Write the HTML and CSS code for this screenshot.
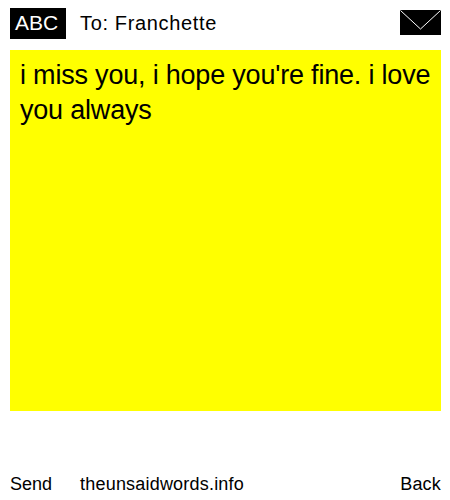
FILE: index.html
```html
<!DOCTYPE html>
<html lang="en">
<head>
<meta charset="UTF-8" />
<meta name="viewport" content="width=device-width, initial-scale=1" />
<title>The Unsaid Words</title>
<link rel="stylesheet" href="styles.css">
</head>
<body>

<div class="top">
  <div class="mode">ABC</div>
  <div class="to">To: Franchette</div>
  <svg class="envelope" width="41" height="25" viewBox="0 0 41 25">
    <rect width="41" height="25" fill="#000" />
    <path d="M0.5 0.5 L20.5 19 L40.5 0.5" fill="none" stroke="#fff" stroke-width="1" />
  </svg>
</div>

<div class="message">i miss you, i hope you're fine. i love you always</div>

<div class="bottom">
  <span class="send">Send</span>
  <span class="site">theunsaidwords.info</span>
  <span class="back">Back</span>
</div>

</body>
</html>
```

FILE: styles.css
```css
html, body {
  height: 100%;
}
body {
  margin: 0;
  padding: 8px 9px 0 10px;
  box-sizing: border-box;
  display: flex;
  flex-direction: column;
  font-family: "Liberation Sans", Arial, sans-serif;
  background-color: #fff;
  color: #000;
  overflow: hidden;
}
.top {
  display: flex;
  align-items: center;
  height: 31px;
}
.mode {
  width: 56px;
  height: 31px;
  padding-right: 3px;
  box-sizing: border-box;
  line-height: 29px;
  background-color: #000;
  color: #fff;
  font-size: 21px;
  text-align: center;
}
.to {
  margin-left: 14px;
  font-size: 20px;
  letter-spacing: 0.65px;
}
.envelope {
  margin-left: auto;
  margin-top: -3px;
}
.message {
  height: 361px;
  margin-top: 11px;
  padding: 8px 10px 10px;
  box-sizing: border-box;
  background-color: #ff0;
  font-size: 27px;
  line-height: 35px;
  letter-spacing: -0.2px;
}
.bottom {
  display: flex;
  margin-top: 63px;
  font-size: 18px;
  line-height: 20px;
}
.site {
  margin-left: 28px;
  letter-spacing: 0.2px;
}
.back {
  margin-left: auto;
  letter-spacing: 0.2px;
}
```
